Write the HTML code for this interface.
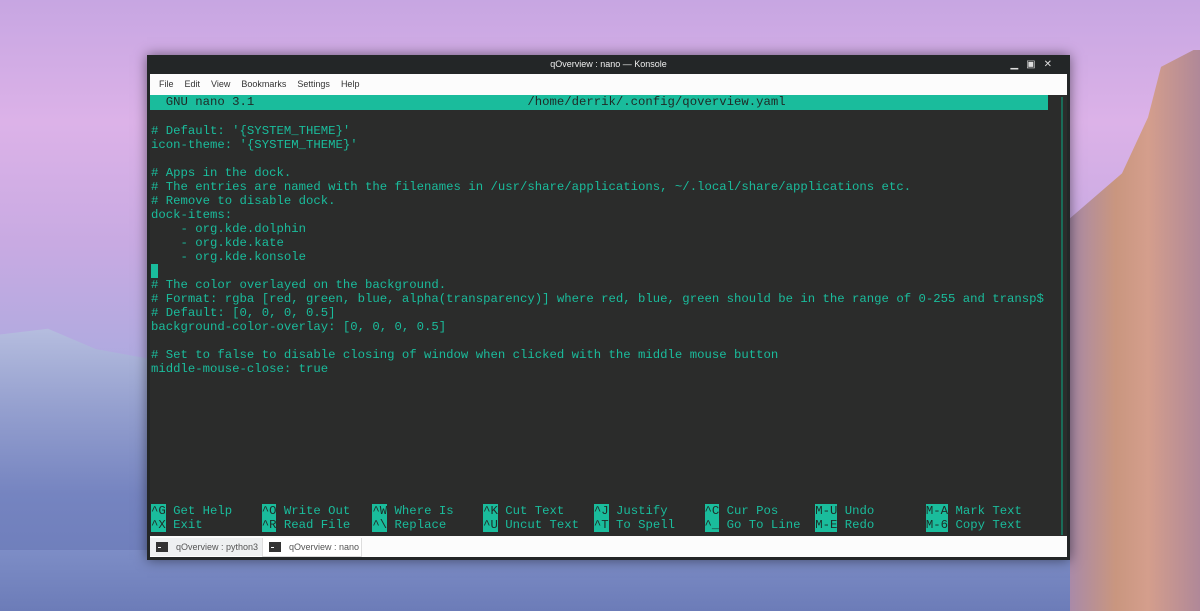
<!DOCTYPE html>
<html><head><style>
body{margin:0;width:1200px;height:611px;overflow:hidden;position:relative;font-family:"Liberation Sans",sans-serif;
background:linear-gradient(180deg,#c7a6e2 0%,#dcb2e8 20%,#c8aae2 40%,#b4aae0 55%,#a0a6dc 70%,#8f98d0 100%);}
.mtnL{position:absolute;left:0;top:320px;width:160px;height:291px;background:linear-gradient(180deg,#b9c0e0,#95a0cf 30%,#7584c0 60%,#6a7ab8);clip-path:polygon(0 5%,30% 3%,60% 10%,100% 14%,100% 100%,0 100%);}
.mtnB{position:absolute;left:0;top:550px;width:1200px;height:61px;background:linear-gradient(180deg,#7d8dc6,#6c7cb8);}
.rock{position:absolute;left:1070px;top:50px;width:130px;height:561px;background:linear-gradient(90deg,#a98aa8,#c9967f 35%,#d49e8c 60%,#b08898);clip-path:polygon(0 30%,40% 22%,60% 12%,70% 3%,95% 0,100% 0,100% 100%,0 100%);}
.win{position:absolute;left:147px;top:55px;width:923px;height:505px;background:#232627;box-shadow:0 0 12px rgba(0,0,0,.5);}
.title{position:absolute;top:0;left:0;width:100%;height:19px;color:#eee;font-size:9px;text-align:center;line-height:19px;}
.menu{position:absolute;top:19px;left:3px;width:917px;height:21px;background:#fcfcfc;font-size:9px;color:#333;line-height:21px;}
.menu span{margin-left:9px;margin-right:2px}
.term{position:absolute;top:40px;left:3px;width:917px;height:441px;background:#2b2c2b;}
.hdr{position:absolute;left:0;top:0;width:898px;height:15px;background:#1abc9c;}
pre{margin:0;position:absolute;font-family:"Liberation Mono",monospace;font-size:12.3px;line-height:14px;color:#1abc9c;}
.k{background:#1abc9c;color:#1f2a26}
.tabs{position:absolute;top:481px;left:3px;width:917px;height:21px;background:#fcfcfc;font-size:9px;color:#555;}
.tab{position:absolute;top:2px;height:18px;line-height:18px;padding-left:26px;}
.ico{position:absolute;left:6px;top:4px;width:12px;height:10px;background:#333;}
.ico:after{content:"";position:absolute;left:2px;top:5px;width:3px;height:1px;background:#fff}
.sb{position:absolute;left:911px;top:2px;width:2px;height:438px;background:#1a6b58;}
</style></head><body>
<div class="mtnL"></div><div class="mtnB"></div><div class="rock"></div>
<div class="win">
<div class="title">qOverview : nano — Konsole<span style="position:absolute;right:10px;top:0;color:#ddd;font-size:10px;letter-spacing:8px">▁▣✕</span></div>
<div class="menu"><span>File</span><span>Edit</span><span>View</span><span>Bookmarks</span><span>Settings</span><span>Help</span></div>
<div class="term">
<div class="hdr"></div>
<pre style="left:1px;top:0;color:#1f2a26">  GNU nano 3.1                                     /home/derrik/.config/qoverview.yaml</pre>
<pre style="left:1px;top:29px"># Default: '{SYSTEM_THEME}'
icon-theme: '{SYSTEM_THEME}'

# Apps in the dock.
# The entries are named with the filenames in /usr/share/applications, ~/.local/share/applications etc.
# Remove to disable dock.
dock-items:
    - org.kde.dolphin
    - org.kde.kate
    - org.kde.konsole
<span class="k"> </span>
# The color overlayed on the background.
# Format: rgba [red, green, blue, alpha(transparency)] where red, blue, green should be in the range of 0-255 and transp$
# Default: [0, 0, 0, 0.5]
background-color-overlay: [0, 0, 0, 0.5]

# Set to false to disable closing of window when clicked with the middle mouse button
middle-mouse-close: true</pre>
<pre style="left:1px;top:409px"><span class="k">^G</span> Get Help    <span class="k">^O</span> Write Out   <span class="k">^W</span> Where Is    <span class="k">^K</span> Cut Text    <span class="k">^J</span> Justify     <span class="k">^C</span> Cur Pos     <span class="k">M-U</span> Undo       <span class="k">M-A</span> Mark Text
<span class="k">^X</span> Exit        <span class="k">^R</span> Read File   <span class="k">^\</span> Replace     <span class="k">^U</span> Uncut Text  <span class="k">^T</span> To Spell    <span class="k">^_</span> Go To Line  <span class="k">M-E</span> Redo       <span class="k">M-6</span> Copy Text</pre>
<div class="sb"></div>
</div>
<div class="tabs">
<div class="tab" style="left:0;width:86px;background:#eef0f1"><div class="ico"></div>qOverview : python3</div>
<div class="tab" style="left:112px;width:72px;background:#fff;border:1px solid #ddd;border-top:0;padding-left:26px"><div class="ico"></div>qOverview : nano</div>
</div>
</div>
</body></html>
